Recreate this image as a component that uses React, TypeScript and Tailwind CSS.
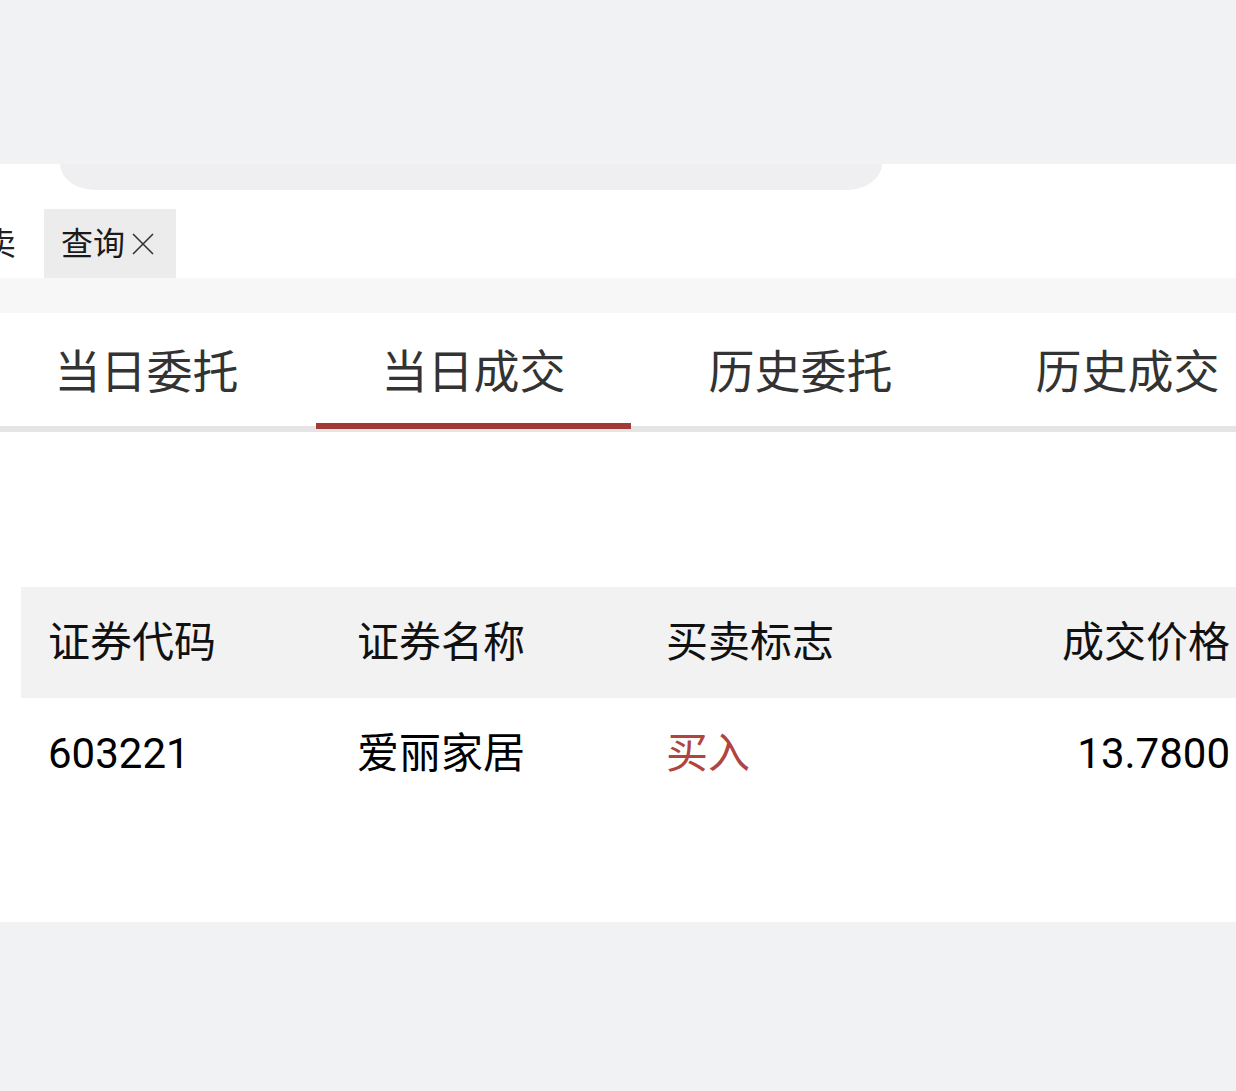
import React from "react";

const tabs = ["当日委托", "当日成交", "历史委托", "历史成交"];

const columns = [
  { key: "code", title: "证券代码", align: "left" },
  { key: "name", title: "证券名称", align: "left" },
  { key: "side", title: "买卖标志", align: "left" },
  { key: "price", title: "成交价格", align: "right" },
];

const rows = [{ code: "603221", name: "爱丽家居", side: "买入", price: "13.7800" }];

const App = () => {
  const active = 1;

  return (
    <div
      className="w-full h-[1091px] overflow-hidden bg-white flex flex-col"
      style={{ fontFamily: 'Roboto, "Noto Sans CJK SC", sans-serif' }}
    >
      {/* 顶部灰色区域 */}
      <div className="h-[164px] shrink-0 bg-[#f1f2f4]" />
      <div className="h-[26px] shrink-0">
        <div className="ml-[60px] w-[822px] h-full bg-[#efeff1] rounded-bl-[36px_26px] rounded-br-[36px_26px]" />
      </div>

      {/* 打开的页签 */}
      <div className="h-[19px] shrink-0" />
      <div className="h-[69px] shrink-0 flex items-stretch overflow-hidden">
        <span className="-ml-[16px] self-center text-[32px] leading-none text-[#222]">卖</span>
        <div className="ml-[28px] flex items-center bg-[#ececec] pl-[17px] pr-[21px]">
          <span className="text-[32px] leading-none text-[#1a1a1a]">查询</span>
          <svg width="24" height="24" viewBox="0 0 24 24" className="ml-[6px]">
            <line x1="2" y1="2" x2="22" y2="22" stroke="#333" strokeWidth="1.6" />
            <line x1="22" y1="2" x2="2" y2="22" stroke="#333" strokeWidth="1.6" />
          </svg>
        </div>
      </div>
      <div className="h-[35px] shrink-0 bg-[#f7f7f7]" />

      {/* 委托/成交切换 */}
      <div className="h-[119px] shrink-0 border-b-[6px] border-[#e5e5e5] overflow-visible">
        <div className="-ml-[17px] flex h-full">
          {tabs.map((t, i) => (
            <div
              key={t}
              className="relative w-[327px] shrink-0 flex items-center justify-center pt-[5px] text-[46px] leading-none text-[#333]"
            >
              {t}
              {i === active && (
                <div className="absolute left-[6px] right-[6px] -bottom-[3px] h-[6px] bg-[#a33a36]" />
              )}
            </div>
          ))}
        </div>
      </div>

      <div className="h-[155px] shrink-0" />

      {/* 成交列表 */}
      <div className="pl-[21px] shrink-0 overflow-hidden">
        <div className="w-[1236px]">
          <div className="flex h-[111px] bg-[#f2f2f2]">
            {columns.map((c) => (
              <div
                key={c.key}
                className={
                  "w-[309px] shrink-0 flex items-center px-[27px] text-[42px] leading-none text-[#111] " +
                  (c.align === "right" ? "justify-end" : "justify-start")
                }
              >
                {c.title}
              </div>
            ))}
          </div>
          {rows.map((r) => (
            <div key={r.code} className="flex h-[112px]">
              <div className="w-[309px] shrink-0 flex items-center px-[27px] text-[42px] leading-none text-black">
                {r.code}
              </div>
              <div className="w-[309px] shrink-0 flex items-center px-[27px] text-[42px] leading-none text-black">
                {r.name}
              </div>
              <div className="w-[309px] shrink-0 flex items-center px-[27px] text-[42px] leading-none text-[#b0443f]">
                {r.side}
              </div>
              <div className="w-[309px] shrink-0 flex items-center justify-end px-[27px] text-[42px] leading-none text-black">
                {r.price}
              </div>
            </div>
          ))}
        </div>
      </div>

      <div className="h-[112px] shrink-0" />
      <div className="flex-1 bg-[#f1f2f4]" />
    </div>
  );
};

export default App;
